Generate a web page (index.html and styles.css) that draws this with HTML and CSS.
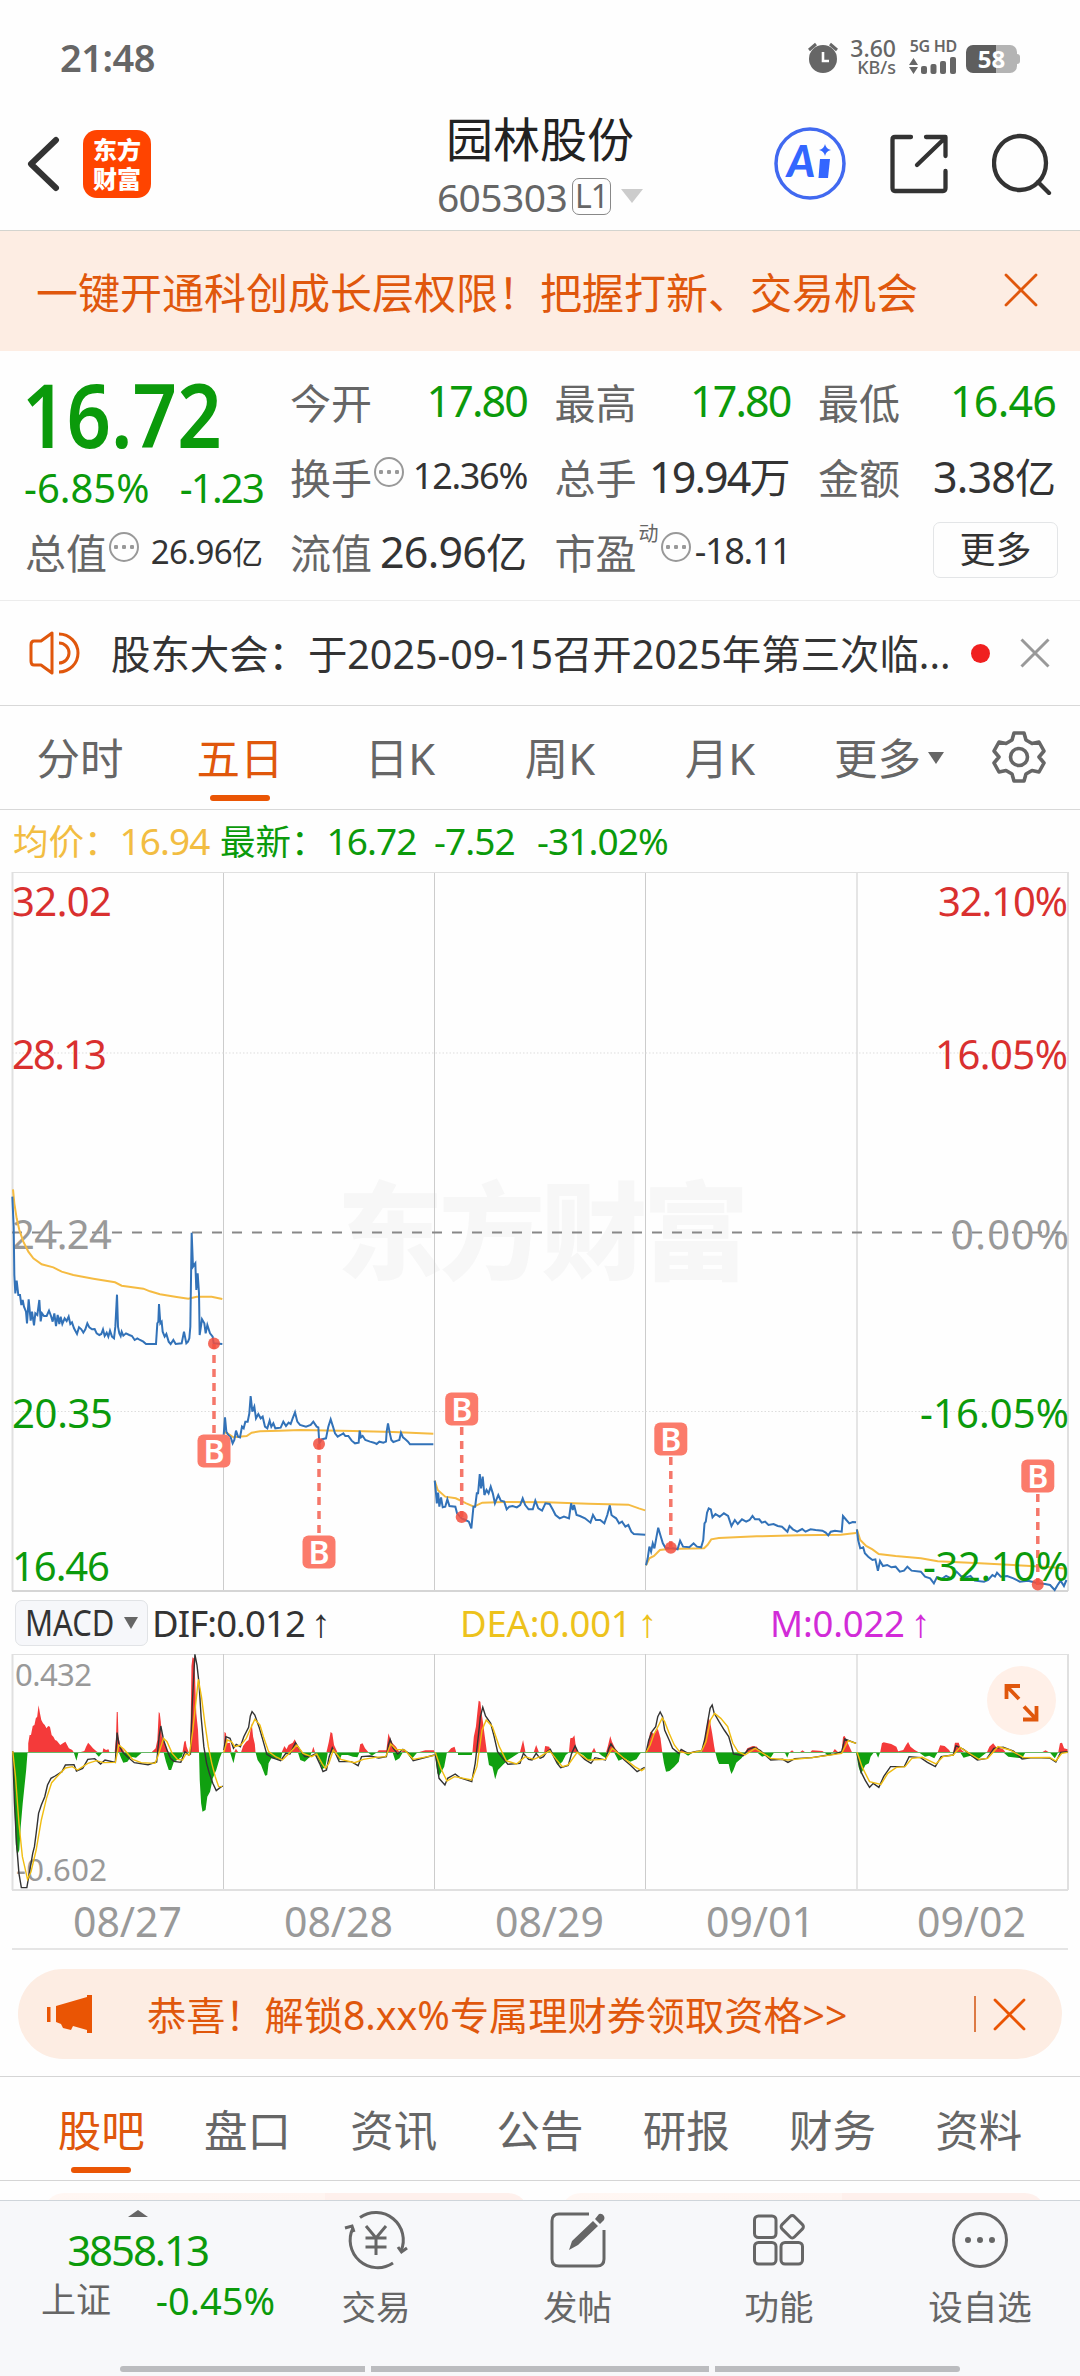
FILE: index.html
```html
<!DOCTYPE html>
<html lang="zh-CN">
<head>
    <meta charset="UTF-8">
    <meta name="viewport" content="width=device-width, initial-scale=1.0">
    <title>园林股份 605303</title>
    <link rel="stylesheet" href="styles.css">
</head>
<body>

<div class="status-bar">
    <span class="time">21:48</span>
    <div class="status-icons">
        <svg class="alarm" width="30" height="32" viewBox="0 0 30 32">
            <circle cx="15" cy="17" r="14" fill="#666"/>
            <path d="M1 8L8 2M29 8L22 2" stroke="#666" stroke-width="3"/>
            <path d="M15 10V19H21" fill="none" stroke="#fff" stroke-width="2.6"/>
        </svg>
        <div class="speed"><b>3.60</b><i>KB/s</i></div>
        <div class="network">
            <b>5G HD</b>
            <svg width="49" height="18" viewBox="0 0 49 18" fill="#666">
                <path d="M1 8L5.500 1L10 8ZM1 10L5.500 17L10 10Z"/>
                <rect x="13" y="9" width="6" height="8" rx="2"/>
                <rect x="22.500" y="7" width="6" height="10" rx="2"/>
                <rect x="32" y="4" width="6" height="13" rx="2"/>
                <rect x="42" y="0" width="6" height="17" rx="2"/>
            </svg>
        </div>
        <div class="battery"><span>58</span></div>
        <i class="battery-tip"></i>
    </div>
</div>

<header class="header">
    <div class="header-left">
        <svg width="34" height="58" viewBox="0 0 34 58"><path d="M29 5L4 29L29 53" fill="none" stroke="#333" stroke-width="6" stroke-linecap="round" stroke-linejoin="round"/></svg>
        <div class="logo">东方<br>财富</div>
    </div>
    <div class="title">
        <h1>园林股份</h1>
        <p><span class="code">605303</span><span class="level">L1</span><span class="arrow-down"></span></p>
    </div>
    <div class="header-right">
        <svg width="72" height="73" viewBox="0 0 72 73">
            <ellipse cx="36" cy="36.500" rx="34" ry="34.500" fill="none" stroke="#4169f0" stroke-width="3.500"/>
            <text x="13" y="50" class="ai-text">A</text>
            <path d="M46 32H56L54 51H44.500Z" fill="#3366ff"/>
            <path d="M51 17Q52 22 57 23Q52 24 51 29Q50 24 45 23Q50 22 51 17Z" fill="#3366ff"/>
        </svg>
        <svg width="58" height="60" viewBox="0 0 58 60" fill="none" stroke="#333" stroke-width="4.300" stroke-linecap="round" stroke-linejoin="round">
            <path d="M21 3H5Q2.500 3 2.500 5.500V54Q2.500 57 5 57H53Q55.500 57 55.500 54V37M36 3H55.500V22M54 5L27 31"/>
        </svg>
        <svg width="60" height="62" viewBox="0 0 60 62" fill="none" stroke="#333" stroke-width="4.300" stroke-linecap="round">
            <ellipse cx="28" cy="30" rx="26" ry="27"/><path d="M46 49L57 60"/>
        </svg>
    </div>
</header>

<div class="banner">
    <span>一键开通科创成长层权限！把握打新、交易机会</span>
    <svg width="34" height="34" viewBox="0 0 34 34"><path d="M2 2L32 32M32 2L2 32" stroke="#e0570c" stroke-width="2.800" stroke-linecap="round"/></svg>
</div>

<section class="quote">
    <div class="price">
        <div class="last"><span>16.72</span></div>
        <div class="change"><span>-6.85%</span><span class="tight">-1.23</span></div>
        <div class="cell"><label>总值</label><i class="more-dot"></i><span class="num xs">26.96<em>亿</em></span></div>
    </div>
    <div class="quote-grid">
        <div class="cell"><label>今开</label><span class="num green">17.80</span></div>
        <div class="cell"><label>最高</label><span class="num green">17.80</span></div>
        <div class="cell"><label>最低</label><span class="num green wide">16.46</span></div>
        <div class="cell"><label>换手</label><i class="more-dot"></i><span class="num sm">12.36%</span></div>
        <div class="cell"><label>总手</label><span class="num">19.94<em>万</em></span></div>
        <div class="cell"><label>金额</label><span class="num wide">3.38<em>亿</em></span></div>
        <div class="cell"><label>流值</label><span class="num wide">26.96<em>亿</em></span></div>
        <div class="cell"><label>市盈</label><sup>动</sup><i class="more-dot"></i><span class="num sm">-18.11</span></div>
        <div class="cell last-cell"><button type="button" class="more-btn">更多</button></div>
    </div>
</section>

<div class="notice">
    <svg width="52" height="44" viewBox="0 0 52 44" fill="none" stroke="#e0570c" stroke-width="3" stroke-linejoin="round">
        <path d="M23 2V42L12 34H5Q2 34 2 30V14Q2 10 5 10H12Z"/>
        <path d="M30 12A10 10 0 0 1 30 32M30 3A19 19 0 0 1 30 41"/>
    </svg>
    <p>股东大会：于2025-09-15召开2025年第三次临...</p>
    <span class="red-dot"></span>
    <svg class="close" width="30" height="30" viewBox="0 0 30 30"><path d="M1.500 1.500L28.500 28.500M28.500 1.500L1.500 28.500" stroke="#999" stroke-width="3"/></svg>
</div>

<nav class="period-tabs">
    <a>分时</a>
    <a class="active">五日</a>
    <a>日K</a>
    <a>周K</a>
    <a>月K</a>
    <a class="more">更多<i></i></a>
    <svg width="54" height="54" viewBox="0 0 54 54" fill="none" stroke="#666" stroke-width="3.600" stroke-linejoin="round">
        <path d="M22 3H32L34 10L40 13.500L47 12L52 21L47 27L52 33L47 42L40 40.500L34 44L32 51H22L20 44L14 40.500L7 42L2 33L7 27L2 21L7 12L14 13.500L20 10Z"/>
        <circle cx="27" cy="27" r="8.500"/>
    </svg>
</nav>

<div class="summary">
    <span class="avg">均价：<b>16.94</b></span>
    <span class="now">最新：<b>16.72</b></span>
    <span><b>-7.52</b></span>
    <span><b>-31.02%</b></span>
</div>

<!-- 价格走势 -->
<svg class="chart" width="1080" height="720" viewBox="0 872 1080 720">
    <g class="watermark"><text x="337" y="1271" textLength="412">东方财富</text></g>
    <g class="grid">
        <path d="M12 872.500H1068"/>
        <path d="M223.500 873V1591M434.500 873V1591M645.500 873V1591M857 873V1591" stroke="#ccc"/>
        <path d="M12.500 872V1591M1068 872V1591" stroke-width="2"/>
        <path d="M12 1053H1068M12 1411.500H1068" stroke="#ddd" stroke-dasharray="1.500 2"/>
        <path d="M12 1591H1068" stroke="#d5d5d5" stroke-width="2"/>
    </g>
    <path d="M12 1232.500H1068" stroke="#888" stroke-width="2" stroke-dasharray="10 10"/>
    <g class="axis" text-rendering="geometricPrecision">
        <g fill="#d9302f">
            <text x="12" y="916" textLength="100">32.02</text>
            <text x="12" y="1069" textLength="95">28.13</text>
            <text x="938" y="916" textLength="130">32.10%</text>
            <text x="935" y="1069" textLength="133">16.05%</text>
        </g>
        <g fill="#999">
            <text x="12" y="1249" textLength="100">24.24</text>
            <text x="951" y="1249" textLength="118">0.00%</text>
        </g>
    </g>
    <g class="line avg-line">
        <g transform="translate(0 1160) scale(.33333)">
            <polyline points="39,88 43,130 50,175 58,210 70,245 85,275 100,295 125,313 160,322 185,335 220,345 280,356 345,367 365,377 430,386 450,394 480,403 530,411 565,416 590,410 635,410 667,417"/>
            <polyline points="670,815 685,822 700,832 740,828 755,818 780,814 840,812 900,810 1060,813 1180,816 1300,821"/>
        </g>
        <g transform="translate(420 1160) scale(.42088 .33333)">
            <polyline points="35,962 42,990 60,1010 85,1015 110,1030 128,1040 148,1028 200,1026 300,1027 400,1031 495,1034 520,1045 535,1051"/>
            <polyline points="537,1216 545,1195 556,1188 570,1170 590,1167 675,1165 683,1155 692,1138 710,1134 800,1129 900,1126 1000,1124 1020,1121 1036,1119"/>
            <polyline points="1038,1108 1046,1140 1060,1158 1075,1168 1090,1182 1130,1188 1190,1195 1230,1204 1330,1210 1440,1217 1500,1222 1536,1226"/>
        </g>
    </g>
    <g class="line price-line">
        <g transform="translate(0 1160) scale(.33333)">
            <polyline points="37,110 41,200 43,345 46,400 50,362 55,405 60,405 64,435 68,420 72,440 78,455 81,490 86,418 92,482 96,455 102,496 106,460 112,465 118,420 122,484 126,460 132,468 140,468 147,452 153,468 158,485 163,460 168,498 173,465 178,492 182,470 187,492 194,475 200,483 206,470 211,492 216,487 222,505 231,522 237,502 244,508 250,518 256,508 262,490 268,502 276,508 284,507 290,520 298,525 304,522 309,508 314,528 320,518 325,530 330,512 336,530 342,535 346,500 351,404 354,500 358,520 362,528 365,515 370,527 378,520 388,525 396,528 404,540 412,535 420,540 430,545 438,552 468,552 472,490 475,485 477,432 481,490 485,485 488,515 494,530 499,522 506,545 512,552 520,540 527,552 545,550 552,515 559,550 564,545 568,535 571,500 575,218 579,320 586,310 589,390 593,340 597,400 599,525 606,478 613,490 617,520 622,495 630,520 638,530 641,550 667,552"/>
            <polyline points="670,840 675,772 679,815 685,825 692,832 698,850 703,840 708,812 714,830 720,832 726,800 731,805 736,785 743,785 748,760 752,708 757,755 763,740 768,775 775,762 782,775 788,770 795,800 802,805 809,782 814,800 820,790 826,805 842,803 850,785 858,798 866,788 872,792 878,775 885,757 892,785 900,795 918,800 932,795 940,785 950,800 955,802 958,850 965,838 978,835 985,800 992,778 999,800 1005,820 1013,830 1022,825 1030,820 1036,828 1045,828 1055,842 1065,850 1076,848 1079,812 1083,832 1088,828 1096,840 1110,845 1122,848 1130,852 1138,845 1150,848 1158,845 1160,815 1164,790 1169,818 1174,840 1180,846 1192,842 1198,840 1203,818 1209,832 1216,838 1224,845 1230,853 1300,853"/>
        </g>
        <g transform="translate(420 1160) scale(.42088 .33333)">
            <polyline points="35,962 38,1000 40,1030 43,998 46,1040 50,1012 54,1042 60,1040 65,1018 70,1038 84,1040 88,1060 99,1075 108,1080 116,1085 122,1105 127,1040 131,1040 135,1000 138,1000 142,942 145,985 149,950 153,1005 158,990 163,1000 168,980 173,1000 178,1030 186,1005 192,1022 200,1025 206,1048 212,1040 220,1038 230,1042 238,1035 244,1015 250,1035 258,1048 268,1048 274,1022 281,1045 290,1052 298,1030 308,1032 316,1050 322,1065 332,1075 342,1070 354,1075 359,1030 363,1050 366,1035 372,1065 380,1068 392,1075 405,1088 411,1065 418,1080 428,1080 438,1090 445,1065 451,1036 455,1065 460,1070 466,1075 473,1090 480,1085 488,1100 495,1095 502,1115 508,1122 535,1124"/>
            <polyline points="537,1216 541,1195 545,1160 549,1175 553,1150 557,1165 562,1130 566,1103 571,1125 577,1150 584,1165 596,1163 612,1168 618,1142 625,1160 640,1162 650,1150 658,1160 668,1162 673,1140 676,1090 679,1085 682,1058 686,1045 691,1048 695,1072 702,1062 712,1070 722,1060 732,1068 740,1098 748,1080 755,1092 765,1078 775,1085 783,1080 790,1068 796,1078 806,1078 812,1088 820,1085 828,1095 840,1092 850,1098 860,1100 873,1115 878,1098 886,1108 896,1115 908,1107 916,1115 928,1108 940,1110 956,1112 964,1118 970,1126 976,1115 986,1112 1002,1115 1005,1068 1013,1080 1020,1090 1028,1086 1036,1087"/>
            <polyline points="1038,1108 1041,1140 1046,1165 1053,1162 1057,1180 1065,1190 1075,1200 1082,1198 1088,1232 1093,1203 1100,1218 1110,1215 1120,1222 1130,1220 1140,1235 1150,1232 1158,1220 1168,1232 1190,1235 1200,1250 1212,1255 1221,1270 1228,1252 1238,1258 1250,1248 1262,1255 1275,1235 1285,1248 1298,1252 1308,1248 1318,1262 1340,1265 1350,1260 1360,1245 1366,1250 1371,1238 1380,1250 1395,1248 1410,1255 1425,1265 1445,1262 1468,1270 1485,1272 1497,1275 1508,1290 1515,1275 1522,1262 1530,1278 1536,1260"/>
        </g>
    </g>
    <!-- 买入点 -->
    <g stroke="#f5776a" stroke-width="3.500" stroke-dasharray="8 6">
        <path d="M214 1433V1344M319 1533V1444M461.700 1427V1517M670.800 1457V1548M1037.800 1494V1585"/>
    </g>
    <g fill="#f24f3e" fill-opacity=".85">
        <circle cx="214" cy="1343.500" r="6"/><circle cx="319" cy="1444" r="6"/><circle cx="461.700" cy="1517" r="6"/>
        <circle cx="670.800" cy="1547.700" r="6"/><circle cx="1037.800" cy="1584.500" r="6"/>
    </g>
    <g fill="#fb7b6b">
        <rect x="197.500" y="1434.500" width="33" height="33" rx="6"/>
        <rect x="302.500" y="1535.500" width="33" height="33" rx="6"/>
        <rect x="445.200" y="1392.500" width="33" height="33" rx="6"/>
        <rect x="654.300" y="1422.500" width="33" height="33" rx="6"/>
        <rect x="1021.300" y="1459.500" width="33" height="33" rx="6"/>
    </g>
    <g class="buy">
        <text x="214" y="1462.500">B</text>
        <text x="319" y="1563.500">B</text>
        <text x="461.700" y="1420.500">B</text>
        <text x="670.800" y="1450.500">B</text>
        <text x="1037.800" y="1487.500">B</text>
    </g>
    <g class="axis" fill="#0b9a0b">
        <text x="12" y="1428" textLength="101">20.35</text>
        <text x="12" y="1581" textLength="98">16.46</text>
        <text x="920" y="1428" textLength="149">-16.05%</text>
        <text x="923" y="1581" textLength="146">-32.10%</text>
    </g>
</svg>

<div class="macd-bar">
    <button type="button" class="macd-btn"><span>MACD</span><i></i></button>
    <span class="dif">DIF:0.012<i>↑</i></span>
    <span class="dea">DEA:0.001<i>↑</i></span>
    <span class="m">M:0.022<i>↑</i></span>
</div>

<div class="macd">
    <svg width="1080" height="238" viewBox="0 1653 1080 238">
        <g class="grid">
            <path d="M12 1654.500H1068"/>
            <path d="M223.500 1654V1890M434.500 1654V1890M645.500 1654V1890M857 1654V1890" stroke="#ccc"/>
            <path d="M12.500 1654V1890M1068 1654V1890M12 1890H1068" stroke-width="2"/>
        </g>
        <g transform="translate(0 1590) scale(.34435 .33333)">
            <path fill="#f43a3a" d="M82 487V460L86 435H90L95 408L100 405L104 385L108 380L112 346L116 370L120 390L125 400L130 405L135 415L140 408L145 410L150 435L155 440L160 450L165 452L175 465L185 458L190 455L195 465L200 475L210 480L214 487ZM232 487L245 483L250 470L256 458L262 465L270 475L280 484L285 487ZM298 487L300 475L308 480L315 478L318 487ZM333 487L337 440L339 366H342L344 440L350 470L358 480L362 487ZM440 487L452 475L457 450L461 366L464 370L467 395L470 440L478 460L485 475L490 487ZM530 487L535 455L539 452L542 470L548 487ZM552 487L554 380L556 228L559 202L563 205L566 250L570 370L575 420L578 487ZM650 487L652 425L656 430L660 460L668 458L672 487ZM680 487L685 476L692 487ZM700 487L706 468L715 455L722 450L726 430L731 400L735 440L740 462L742 487ZM818 487L826 468L832 478L838 465L850 458L856 448L862 462L872 487ZM905 487L910 470L915 487ZM948 487L955 455L960 426L965 430L970 465L980 487ZM1042 487L1046 463L1053 460L1060 475L1070 487ZM1095 487L1100 481H1122L1128 430L1133 445L1140 460L1150 470L1160 487ZM1165 487L1175 478L1182 487ZM1215 487L1235 481H1260L1262 487ZM1300 487L1310 475L1320 470L1325 487ZM1372 487L1376 440L1382 410L1386 370L1390 332L1395 335L1398 365L1403 400L1408 440L1414 487ZM1510 487L1519 450L1526 487ZM1550 487L1557 465L1565 487Z"/>
            <path fill="#10a010" d="M37 487L42 650L46 765L50 795L56 780L60 712L66 640L70 600L76 540L80 487ZM214 487L222 512L228 487ZM275 487L287 500L298 487ZM345 487L352 505L358 518L370 515L380 500L395 503L410 490L412 487ZM475 487L482 515L490 540H497L505 515L515 510L528 500L532 487ZM578 487L580 570L584 640L588 665L597 660L602 620L610 605L618 565L628 540L638 505L645 487ZM668 487L678 520L685 487ZM742 487L748 510L758 525L770 557L776 555L780 520L788 505H800L815 510L820 487ZM865 487L872 510L885 515L900 500L905 487ZM915 487L928 515L936 538L945 530L952 487ZM975 487L985 512L992 495H1010L1025 500L1038 502L1044 487ZM1068 487L1080 497L1095 487ZM1140 487L1148 512L1160 505L1170 487ZM1180 487L1195 508L1210 490V487ZM1263 487L1270 550L1275 558L1282 545L1290 530L1298 487ZM1330 487V495H1370L1372 487ZM1414 487L1420 525L1430 530L1438 568L1446 540L1460 525L1475 510L1490 500L1510 487Z"/>
        </g>
        <g transform="translate(540 1590) scale(.34435 .33333)">
            <path fill="#f43a3a" d="M12 487L15 468L27 470L32 487ZM84 487L88 445L95 443L100 436L104 470L110 487ZM150 487L157 473L163 487ZM192 487L198 465L204 438L209 455L218 475L228 487ZM310 487L316 450L320 425L325 428L332 432L342 416L346 430L350 445L355 487ZM405 487L412 478L420 487ZM440 487L455 482L460 487ZM470 487L478 450L484 410L489 382L494 395L500 430L506 470L509 487ZM596 487L602 475L618 468L630 470L640 487ZM725 487L732 481L738 487ZM755 487L762 481L770 487ZM785 487L790 481L820 483L825 487ZM850 487L856 477L866 487ZM876 487L880 440L885 438L892 455L902 478L906 487ZM988 487L993 460L998 457L1020 462L1035 470L1040 484L1055 480L1063 465L1069 456L1076 470L1088 480L1100 487ZM1155 487L1162 466L1175 468L1188 480L1192 487ZM1200 487L1205 458H1216L1222 478L1232 487ZM1298 487L1305 470L1316 460L1325 472L1345 478L1352 487ZM1458 487L1468 481L1478 487ZM1505 487L1510 460L1516 458L1522 475L1532 478V487Z"/>
            <path fill="#10a010" d="M32 487L45 505L52 525L58 522L65 515L75 495L85 487ZM110 487L125 495L140 510L148 512L152 487ZM168 487L180 497L192 505L196 487ZM215 487L228 512L245 505L262 515L280 508L290 492L295 487ZM355 487L360 520L366 545L376 543L390 530L403 515L408 487ZM415 487L430 497L445 487ZM509 487L515 510L520 522H548L552 540L556 552L562 540L570 518L585 505L598 487ZM630 487L645 500L658 495L670 503L680 487ZM700 487L712 490L718 503L724 487ZM825 487L838 498L850 487ZM918 487L925 530L932 552L938 540L945 525L955 520L960 500L970 487ZM975 487L982 503L988 487ZM1100 487L1118 500L1130 497L1145 505L1155 487ZM1220 487L1230 503L1250 497L1270 510L1285 497L1298 487ZM1345 487L1360 500L1385 503L1400 505L1410 487ZM1480 487L1495 505L1505 487Z"/>
        </g>
        <path d="M12 1752.500H1068" stroke="#68b868" stroke-width="1"/>
        <g class="axis-small">
            <text x="15" y="1686" textLength="77">0.432</text>
            <text x="16" y="1881" textLength="91">-0.602</text>
        </g>
        <g class="thin">
            <g transform="translate(0 1590) scale(.34435 .33333)">
                <g stroke="#333">
                    <polyline points="37,484 42,640 48,760 55,850 62,893 78,893 85,850 95,790 100,770 105,730 112,670 120,645 130,620 138,585 148,565 160,558 180,545 190,525 215,524 222,543 240,535 255,508 275,506 292,522 305,510 335,517 340,428 346,465 355,485 370,500 390,518 430,524 455,516 462,440 467,408 475,450 485,480 495,505 505,514 525,517 537,485 548,495 553,492 558,350 566,193 572,225 578,280 584,380 592,470 600,520 608,550 618,580 628,602 640,592 647,588"/>
                    <polyline points="650,480 656,440 668,445 678,475 686,463 698,470 708,440 722,412 727,378 732,365 740,375 752,410 762,445 775,493 790,503 815,512 830,490 842,492 858,458 870,478 885,500 900,500 915,492 928,520 938,545 948,540 956,500 965,473 975,492 985,515 1020,515 1040,527 1050,500 1075,498 1100,504 1122,500 1128,465 1133,448 1142,475 1155,492 1170,478 1185,488 1200,512 1262,495"/>
                    <polyline points="1264,490 1275,565 1292,585 1300,565 1322,552 1335,563 1370,575 1380,520 1390,430 1395,380 1402,352 1410,378 1425,400 1435,440 1445,485 1460,505 1475,523 1510,520 1520,490 1535,508 1545,510 1557,490 1568,505"/>
                </g>
                <g stroke="#f0bd10">
                    <polyline points="37,484 45,560 55,700 65,800 80,868 90,845 105,780 120,690 135,625 150,578 170,555 190,534 210,530 225,540 255,520 280,512 300,518 335,517 345,465 360,478 385,508 410,518 450,520 458,500 475,445 485,455 500,490 515,508 530,510 540,492 550,495 560,420 576,268 585,320 595,400 605,470 615,520 625,560 635,590 645,590"/>
                    <polyline points="650,487 660,450 672,455 682,470 700,465 715,445 740,388 755,405 765,440 780,485 800,500 820,510 840,490 862,465 880,490 905,500 920,492 935,520 945,535 955,520 968,480 990,508 1030,518 1055,508 1090,502 1120,500 1135,462 1150,478 1175,480 1200,508 1262,496"/>
                    <polyline points="1264,487 1280,535 1298,573 1320,560 1370,570 1385,530 1400,420 1412,390 1430,410 1450,470 1470,512 1500,522 1525,500 1550,508 1568,500"/>
                </g>
            </g>
            <g transform="translate(540 1590) scale(.34435 .33333)">
                <g stroke="#333">
                    <polyline points="0,505 10,500 20,485 30,478 40,500 50,520 60,533 82,526 92,490 102,468 112,490 130,508 148,520 160,503 190,510 200,475 206,462 218,480 245,510 262,525 282,545 304,532"/>
                    <polyline points="308,487 316,450 325,425 336,410 342,380 349,366 356,380 362,420 375,450 385,475 403,490 410,478 430,490 450,485 470,482 478,450 488,390 494,355 500,345 506,370 520,395 535,420 548,440 555,465 562,492 590,497 605,478 622,472 640,482 670,510 705,508 720,517 740,506 790,503 838,495 855,492 876,485 885,447 918,460"/>
                    <polyline points="921,490 932,545 945,572 957,592 968,580 984,592 998,560 1018,530 1058,530 1072,500 1105,503 1125,517 1148,530 1165,500 1200,495 1208,467 1230,478 1270,510 1298,505 1318,475 1345,472 1375,483 1400,507 1430,503 1480,504 1498,516 1512,487 1532,485"/>
                </g>
                <g stroke="#f0bd10">
                    <polyline points="0,500 28,482 45,505 65,530 82,525 108,487 140,510 190,508 210,475 240,502 275,530 295,542 304,535"/>
                    <polyline points="308,487 320,465 330,435 345,405 355,384 362,395 375,430 390,465 405,485 430,490 470,482 482,455 495,390 507,370 525,385 545,410 560,460 575,485 595,495 625,475 670,505 720,510 790,503 876,490 895,452 918,460"/>
                    <polyline points="921,487 935,530 957,575 990,583 1010,550 1035,532 1060,530 1080,505 1110,502 1150,522 1170,500 1200,495 1220,472 1250,492 1275,508 1300,505 1330,470 1365,480 1405,503 1480,502 1498,513 1515,490 1532,487"/>
                </g>
            </g>
        </g>
        <circle cx="1021.500" cy="1700.500" r="34.500" fill="#fff0e8"/>
        <path d="M1020 1686H1006.500V1699M1007 1686.500L1019 1699M1023 1719.500H1036.500V1706M1036 1719L1024 1706.500" fill="none" stroke="#e0570c" stroke-width="3.800"/>
    </svg>
</div>

<div class="dates">
    <span>08/27</span><span>08/28</span><span>08/29</span><span>09/01</span><span>09/02</span>
</div>

<div class="promo">
    <svg width="46" height="40" viewBox="0 0 46 40" fill="#ea5504">
        <path d="M0 13H3.500V28H0ZM9 12L40 3V1H45V39H40V36L26 32L24 36L16 34L14 30L9 28Z"/>
    </svg>
    <p>恭喜！解锁8.xx%专属理财券领取资格&gt;&gt;</p>
    <span class="divider"></span>
    <svg width="33" height="33" viewBox="0 0 33 33"><path d="M2 2L31 31M31 2L2 31" stroke="#ea5504" stroke-width="2.800" stroke-linecap="round"/></svg>
</div>

<nav class="info-tabs">
    <a class="active">股吧</a>
    <a>盘口</a>
    <a>资讯</a>
    <a>公告</a>
    <a>研报</a>
    <a>财务</a>
    <a>资料</a>
</nav>

<div class="cards"><div></div><div></div></div>

<footer class="bottom-bar">
    <div class="index">
        <i class="arrow-up"></i>
        <div class="index-value">3858.13</div>
        <div class="index-change"><span>上证</span><b>-0.45%</b></div>
    </div>
    <div class="action">
        <svg width="66" height="60" viewBox="0 0 66 60" fill="none" stroke="#666" stroke-width="3">
            <path d="M17 7.500A27.500 27.500 0 0 1 58 41M50 53A27.500 27.500 0 0 1 10 18"/>
            <path d="M64 38L58.500 42L55 37M2 18L9 16L11 22"/>
            <path d="M23 16L33 28L43 16M33 28V45M22.500 28H43.500M22.500 37H43.500"/>
        </svg>
        <span>交易</span>
    </div>
    <div class="action">
        <svg width="58" height="60" viewBox="0 0 58 60" fill="none" stroke="#666" stroke-width="3">
            <path d="M40 4H10Q3 4 3 11V49Q3 56 10 56H48Q55 56 55 49V20"/>
            <path d="M20 40L23 31L44 11L49 16L29 35ZM46 9L50 4Q53 3 55 6Q56 8 55 10L51 14Z" fill="#666" stroke="none"/>
        </svg>
        <span>发帖</span>
    </div>
    <div class="action">
        <svg width="54" height="60" viewBox="0 0 54 60" fill="none" stroke="#666" stroke-width="3">
            <rect x="2.500" y="6" width="21.500" height="21.500" rx="4"/>
            <rect x="2.500" y="32.500" width="21.500" height="21.500" rx="4"/>
            <rect x="29" y="32.500" width="21.500" height="21.500" rx="4"/>
            <rect x="31.500" y="8" width="17.500" height="17.500" rx="3" transform="rotate(45 40.250 16.750)"/>
        </svg>
        <span>功能</span>
    </div>
    <div class="action">
        <svg width="58" height="60" viewBox="0 0 58 60">
            <circle cx="29" cy="30" r="26.500" fill="none" stroke="#666" stroke-width="3"/>
            <g fill="#666"><circle cx="17" cy="30" r="3"/><circle cx="29" cy="30" r="3"/><circle cx="41" cy="30" r="3"/></g>
        </svg>
        <span>设自选</span>
    </div>
</footer>

<div class="home-line"><i></i><i class="mid"></i><i></i></div>

</body>
</html>
```
FILE: styles.css
```css
* {
    box-sizing: border-box;
}

body {
    font-family: "Noto Sans", "Noto Sans CJK SC", sans-serif;
    margin: 0;
    width: 1080px;
    height: 2376px;
    overflow: hidden;
    background-color: #fefefe;
    color: #333;
}

svg {
    display: block;
    flex: none;
}

i, em {
    font-style: normal;
}

h1, p {
    margin: 0;
    font-weight: 400;
}

/* 状态栏 */
.status-bar {
    height: 100px;
    padding: 14px 60px 0 60px;
    display: flex;
    justify-content: space-between;
    align-items: center;
    color: #666;
}

.time {
    font-size: 38px;
    font-weight: 600;
    letter-spacing: -0.5px;
}

.status-icons {
    display: flex;
    align-items: center;
}

.alarm {
    margin: 2px 10px 0 0;
}

.speed, .network {
    display: flex;
    flex-direction: column;
    align-items: flex-end;
}

.speed {
    width: 48px;
    margin: -2px 12px 0 0;
}

.speed b {
    font-size: 23px;
    line-height: 22px;
    font-weight: 500;
}

.speed i {
    font-size: 18px;
    line-height: 16px;
    font-weight: 500;
}

.network {
    width: 49px;
    margin: -4px 9px 0 0;
}

.network b {
    font-size: 16px;
    line-height: 21px;
    font-weight: 600;
    letter-spacing: -0.3px;
    white-space: nowrap;
}

.battery {
    width: 51px;
    height: 28px;
    margin-top: 4px;
    border-radius: 7px;
    background: linear-gradient(90deg, #5e5e5e 58%, #b4b4b4 58%);
    color: #fff;
    font-size: 24px;
    font-weight: 700;
    line-height: 28px;
    text-align: center;
}

.battery-tip {
    width: 3px;
    height: 10px;
    margin-top: 4px;
    border-radius: 0 3px 3px 0;
    background-color: #b4b4b4;
}

/* 头部 */
.header {
    height: 131px;
    border-bottom: 1px solid #d3d4cf;
    display: grid;
    grid-template-columns: 1fr auto 1fr;
    align-items: start;
}

.header-left {
    display: flex;
    align-items: center;
    gap: 22px;
    padding: 30px 0 0 27px;
}

.logo {
    width: 68px;
    height: 68px;
    border-radius: 14px;
    padding-top: 5px;
    background-color: #ff4400;
    color: #fff;
    font-size: 24px;
    font-weight: 900;
    line-height: 29px;
    text-align: center;
}

.title {
    padding-top: 11px;
    text-align: center;
}

.title h1 {
    font-size: 47px;
    line-height: 56px;
    color: #222;
}

.title p {
    display: flex;
    align-items: center;
    justify-content: center;
    height: 58px;
    color: #666;
}

.code {
    font-size: 39px;
    letter-spacing: -0.6px;
}

.level {
    width: 39px;
    height: 37px;
    margin-left: 5px;
    border: 1.5px solid #888;
    border-radius: 7px;
    font-size: 32px;
    line-height: 33px;
    letter-spacing: -1px;
}

.arrow-down {
    margin-left: 10px;
    border: 11px solid transparent;
    border-top: 14px solid #ccc;
    border-bottom: 0;
}

.header-right {
    display: flex;
    justify-content: flex-end;
    align-items: center;
    gap: 44px;
    padding: 27px 28px 0 0;
}

.ai-text {
    font-family: Lato, sans-serif;
    font-size: 43px;
    font-weight: 900;
    font-style: italic;
    fill: #3366ff;
}

/* 提示条 */
.banner {
    height: 120px;
    padding: 0 42px 2px 36px;
    display: flex;
    justify-content: space-between;
    align-items: center;
    background-color: #fdede3;
    color: #e0570c;
    font-size: 42px;
}

/* 行情 */
.quote {
    height: 250px;
    border-bottom: 1px solid #ececec;
    display: flex;
    padding-left: 25px;
}

.price {
    width: 238px;
}

.last {
    height: 103px;
    padding-top: 16px;
    font-size: 88px;
    font-weight: 600;
    line-height: 94px;
    color: #0b9a0b;
}

.last span {
    display: inline-block;
    transform: scaleX(0.885);
    transform-origin: left;
    margin-left: -3px;
}

.change {
    height: 59px;
    display: flex;
    justify-content: space-between;
    font-size: 40px;
    line-height: 68px;
    color: #0b9a0b;
}

.change span {
    margin-left: -1px;
}

.change .tight {
    letter-spacing: -1.8px;
}

.quote-grid {
    display: grid;
    grid-template-columns: 237px 236px 238px;
    grid-auto-rows: 75px;
    column-gap: 27.5px;
    padding: 12px 0 0 27px;
}

.cell {
    display: flex;
    align-items: center;
    height: 75px;
    white-space: nowrap;
}

.cell label {
    font-size: 41px;
    color: #666;
}

.cell .num {
    margin-left: auto;
    font-size: 43px;
    letter-spacing: -1.9px;
}

.cell .num em {
    font-size: 41px;
    letter-spacing: 0;
}

.cell .num.wide {
    letter-spacing: -0.8px;
}

.cell .num.sm {
    font-size: 36px;
    letter-spacing: -1.3px;
}

.cell .num.xs {
    font-size: 33px;
    letter-spacing: -0.6px;
}

.cell .num.xs em {
    font-size: 31px;
}

.cell .green {
    color: #0b9a0b;
}

.cell sup {
    align-self: flex-start;
    margin: 5px 0 0 2px;
    font-size: 20px;
    color: #666;
}

.more-dot {
    flex: none;
    width: 30px;
    height: 30px;
    margin: -7px 0 0 2px;
    border: 2px solid #999;
    border-radius: 50%;
    background: radial-gradient(circle, #999 2px, transparent 2.4px) center / 8px 8px no-repeat,
        radial-gradient(circle, #999 2px, transparent 2.4px) 1px center / 8px 8px no-repeat,
        radial-gradient(circle, #999 2px, transparent 2.4px) 17px center / 8px 8px no-repeat;
}

.last-cell {
    justify-content: flex-end;
}

.more-btn {
    width: 125px;
    height: 56px;
    margin: -1px -2px 0 0;
    padding: 0;
    border: 1.5px solid #e3e5e7;
    border-radius: 7px;
    background: none;
    font: 36px/50px "Noto Sans", "Noto Sans CJK SC", sans-serif;
    color: #333;
}

/* 公告 */
.notice {
    height: 105px;
    border-bottom: 1px solid #d8d8d8;
    display: flex;
    align-items: center;
    padding-left: 29px;
}

.notice p {
    width: 889px;
    margin-top: -3px;
    padding-left: 30px;
    font-size: 39.4px;
    white-space: nowrap;
}

.red-dot {
    width: 19px;
    height: 19px;
    border-radius: 50%;
    background-color: #f02020;
    margin: 0 30px 0 1px;
}

/* 周期切换 */
.period-tabs {
    height: 104px;
    border-bottom: 1px solid #d8d8d8;
    display: flex;
    align-items: center;
    font-size: 43.5px;
    line-height: 104px;
    color: #666;
}

.period-tabs a {
    width: 160px;
    text-align: center;
}

.period-tabs .active, .info-tabs .active {
    position: relative;
    color: #e0570c;
}

.period-tabs .active::after, .info-tabs .active::after {
    content: "";
    position: absolute;
    left: 50%;
    bottom: 9px;
    width: 60px;
    height: 6px;
    margin-left: -30px;
    border-radius: 3px;
    background-color: #ea5504;
}

.period-tabs .more {
    display: flex;
    align-items: center;
    width: 192px;
    padding-left: 34px;
}

.more i {
    margin-left: 7px;
    border: 8px solid transparent;
    border-top: 12px solid #666;
    border-bottom: 0;
}

.period-tabs svg {
    margin-bottom: 2px;
}

.summary {
    height: 62px;
    display: grid;
    grid-template-columns: 207px 214px 103px 1fr;
    padding-left: 13px;
    font-size: 35.5px;
    line-height: 62px;
    color: #0b9a0b;
}

.summary b {
    font-size: 37px;
    font-weight: 400;
    letter-spacing: -0.9px;
}

.summary .avg {
    color: #f2bd42;
}

/* 图表 */
.grid {
    fill: none;
    stroke: #e0e0e0;
}

.watermark {
    font-family: "Noto Sans CJK SC", sans-serif;
    font-size: 106px;
    font-weight: 900;
    fill: #f7f7f7;
}

.axis {
    font-size: 40px;
}

.line {
    fill: none;
    stroke-width: 2;
}

.line polyline, .thin polyline {
    vector-effect: non-scaling-stroke;
}

.avg-line {
    stroke: #f5bb42;
}

.price-line {
    stroke: #3272b8;
}

.buy {
    font-size: 32px;
    font-weight: 600;
    text-anchor: middle;
    fill: #fff;
}

.macd-bar {
    height: 61px;
    display: grid;
    grid-template-columns: 137px 308px 310px 1fr;
    align-items: center;
    padding-left: 15px;
    font-size: 36.5px;
    letter-spacing: -0.9px;
}

.macd-btn {
    width: 133px;
    height: 46px;
    padding: 0 9px 0 9px;
    display: flex;
    align-items: center;
    justify-content: space-between;
    border: 1px solid #e1e3e6;
    border-radius: 7px;
    background-color: #f6f7fa;
    font: 36px/40px "Noto Sans", sans-serif;
    color: #333;
}

.macd-btn span {
    width: 90px;
    transform: scaleX(0.86);
    transform-origin: left;
}

.macd-btn i {
    flex: none;
    border: 7px solid transparent;
    border-top: 12px solid #666;
    border-bottom: 0;
}

.macd-bar span i {
    margin-left: 6px;
    font-family: "Liberation Sans", sans-serif;
    font-size: 40px;
    line-height: 40px;
}

.macd-bar .dea, .macd-bar .m {
    letter-spacing: -0.2px;
}

.dea {
    color: #edc21c;
}

.m {
    color: #d22bd8;
}

.axis-small {
    font-size: 31px;
    fill: #999;
}

.thin {
    fill: none;
    stroke-width: 1.4;
}

.dates {
    height: 59px;
    margin: 0 12px;
    padding-left: 10px;
    border-bottom: 2px solid #e5e5e5;
    display: grid;
    grid-template-columns: repeat(5, 211px);
    text-align: center;
    font-size: 41px;
    line-height: 60px;
    color: #999;
}

/* 推广 */
.promo {
    height: 90px;
    margin: 19px 18px 17px;
    padding-left: 29px;
    border-radius: 45px;
    display: flex;
    align-items: center;
    background-color: #fdede3;
    color: #e0570c;
    font-size: 39.2px;
}

.promo p {
    width: 881px;
    margin-top: -3px;
    padding-left: 54px;
}

.promo .divider {
    flex: none;
    width: 1.5px;
    height: 36px;
    margin-right: 17px;
    background-color: #dd7a45;
}

.info-tabs {
    height: 105px;
    border-top: 1px solid #d5d5d5;
    border-bottom: 1px solid #d5d5d5;
    display: grid;
    grid-template-columns: repeat(7, 1fr);
    padding: 0 28px;
    text-align: center;
    font-size: 43.5px;
    line-height: 106px;
    color: #666;
}

.info-tabs .active::after {
    bottom: 10px;
}

.cards {
    height: 19px;
    padding: 12px 35px 0 44px;
    display: grid;
    grid-template-columns: 1fr 1fr;
    gap: 33px;
    overflow: hidden;
}

.cards div {
    height: 40px;
    border-radius: 20px;
    background: linear-gradient(90deg, #fff7f3 0, #fff5f1 58%, #fef0ec 58%);
}

/* 底部栏 */
.bottom-bar {
    height: 164px;
    border-top: 1px solid #cfd5da;
    display: grid;
    grid-template-columns: 275px 202px 201px 202px 200px;
    background-color: #f7f8fa;
    color: #666;
}

.index {
    text-align: center;
    color: #0b9a0b;
}

.index .arrow-up {
    display: block;
    width: 0;
    margin: 9px auto 0;
    border: 10px solid transparent;
    border-bottom: 7px solid #666;
    border-top: 0;
}

.index-value {
    font-size: 42px;
    line-height: 66px;
    letter-spacing: -2.1px;
}

.index-change {
    display: flex;
    justify-content: space-between;
    padding-left: 41px;
    line-height: 34px;
}

.index-change span {
    font-size: 35px;
    color: #666;
}

.index-change b {
    font-size: 38px;
    font-weight: 400;
}

.action {
    display: flex;
    flex-direction: column;
    align-items: center;
    padding-top: 9px;
    font-size: 34.5px;
}

.action span {
    margin-top: 12px;
    line-height: 50px;
}

.home-line {
    height: 12px;
    display: grid;
    grid-template-columns: 245px 338px 245px;
    gap: 6px;
    padding: 2px 120px 4px;
    background-color: #f7f8fa;
}

.home-line i {
    background-color: #bbbcbf;
    border-radius: 3px 0 0 3px;
}

.home-line .mid {
    border-radius: 0;
}

.home-line i:last-child {
    border-radius: 0 3px 3px 0;
}
```
